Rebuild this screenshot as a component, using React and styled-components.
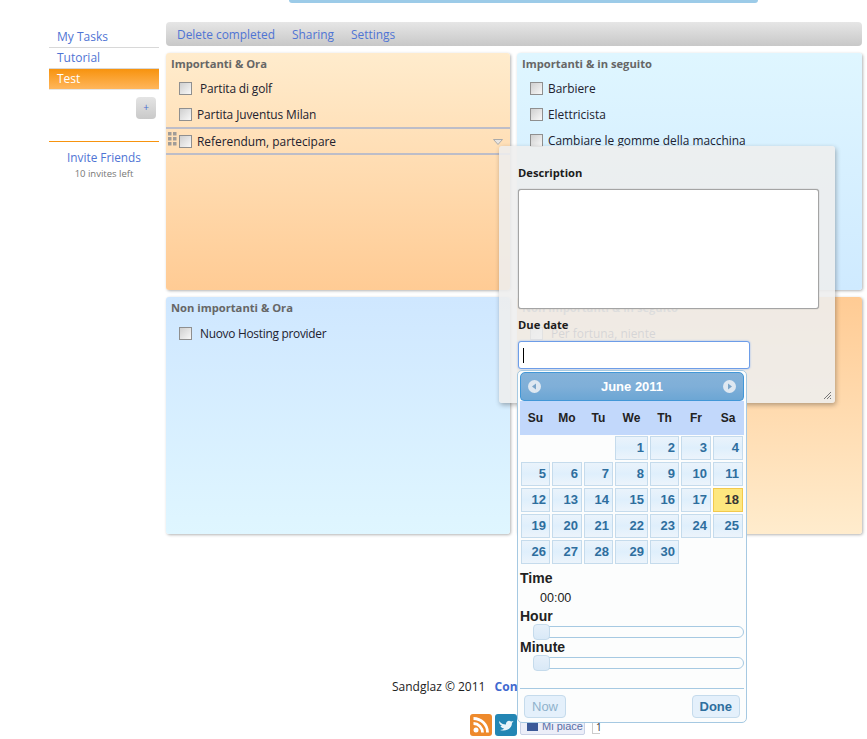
import React from 'react';
import styled, { createGlobalStyle } from 'styled-components';

const GlobalStyle = createGlobalStyle`
    html, body {
        margin: 0;
        padding: 0;
        background: #fff;
    }
    body {
        font-family: "Open Sans", "Noto Sans", sans-serif;
        font-size: 12px;
        color: #222;
        overflow: hidden;
    }
`;

const dayColumns = '29px 30px 29px 33px 29px 30px 30px';

const Page = styled.div`
    position: relative;
    width: 867px;
    height: 739px;
    overflow: hidden;
`;

const Layout = styled.div`
    display: flex;
    gap: 7px;
    padding: 22px 5px 0 49px;
`;

const Sidebar = styled.aside`
    width: 110px;
    padding-top: 5px;
    flex-shrink: 0;
`;

const ListLink = styled.div`
    height: 20px;
    line-height: 20px;
    padding-left: 8px;
    font-size: 12px;
    color: ${p => (p.$active ? '#fff' : '#4f74d4')};
    background: ${p => (p.$active ? 'linear-gradient(#f7930e, #ffb65c)' : 'transparent')};
    border-bottom: 1px solid ${p => (p.$active ? '#e6e6e6' : '#d8d8d8')};
`;

const AddRow = styled.div`
    display: flex;
    justify-content: flex-end;
    padding: 7px 3px 0 0;
`;

const AddButton = styled.div`
    width: 20px;
    height: 22px;
    border-radius: 4px;
    background: linear-gradient(#e4e4e4, #c9c9c9);
    color: #4a6fd0;
    font-size: 10px;
    line-height: 21px;
    text-align: center;
`;

const Invite = styled.div`
    margin-top: 22px;
    border-top: 1px solid #f7930e;
    padding-top: 7px;
    text-align: center;
`;

const InviteLink = styled.div`
    font-size: 11.8px;
    line-height: 16px;
    color: #4f74d4;
`;

const InviteNote = styled.div`
    font-size: 9.5px;
    line-height: 17px;
    color: #777;
`;

const Main = styled.main`
    width: 696px;
`;

const Toolbar = styled.div`
    display: flex;
    gap: 17px;
    align-items: center;
    height: 24px;
    padding-left: 11px;
    border-radius: 4px;
    background: linear-gradient(#e6e6e6, #c8c8c8);
`;

const ToolLink = styled.span`
    font-size: 11.9px;
    color: #4f74d4;
`;

const Grid = styled.div`
    display: grid;
    grid-template-columns: 344px 345px;
    grid-template-rows: 237px 237px;
    gap: 7px;
    margin-top: 7px;
`;

const Quadrant = styled.section`
    border-radius: 3px;
    padding-top: 3px;
    box-shadow: 1px 1px 3px rgba(0, 0, 0, 0.3);
    background: ${p => p.$bg};
`;

const QuadrantTitle = styled.h3`
    margin: 0;
    padding-left: 5px;
    font-size: 11.2px;
    line-height: 15px;
    font-weight: 700;
    color: #666;
`;

const Tasks = styled.div`
    margin-top: ${p => p.$top}px;
`;

const Task = styled.div`
    position: relative;
    display: flex;
    align-items: center;
    height: 26px;
    padding-left: 13px;
    font-size: 11.9px;
    letter-spacing: ${p => p.$track || 0}px;
    color: #22222e;
    ${p => p.$selected && `
        height: 24px;
        border-top: 2px solid #bdbdc8;
        border-bottom: 2px solid #bdbdc8;
    `}
`;

const Check = styled.span`
    flex-shrink: 0;
    width: 11px;
    height: 11px;
    margin-right: ${p => p.$gap || 5}px;
    border: 1px solid #8f8f8f;
    background: linear-gradient(135deg, #cfcfcf, #f8f8f8);
`;

const Grip = styled.svg`
    position: absolute;
    left: 2px;
    top: 3px;
`;

const Arrow = styled.svg`
    position: absolute;
    right: 7px;
    top: 10px;
`;

const Footer = styled.footer`
    margin-top: 145px;
    padding-left: 392px;
`;

const FooterText = styled.div`
    font-size: 12px;
    line-height: 16px;
    color: #222;
    white-space: nowrap;

    b {
        margin-left: 6px;
        color: #3f69cf;
    }
`;

const Social = styled.div`
    display: flex;
    gap: 3px;
    margin: 19px 0 0 78px;
`;

const IconTile = styled.svg`
    display: block;
    border-radius: 3px;
`;

const LikeButton = styled.div`
    display: flex;
    align-items: center;
    gap: 4px;
    box-sizing: border-box;
    width: 65px;
    height: 19px;
    margin-top: 2px;
    padding-left: 6px;
    border: 1px solid #c9d1e6;
    border-radius: 2px;
    background: #eceef8;
    font-family: "Liberation Sans", Arial, sans-serif;
    font-size: 11px;
    white-space: nowrap;
    color: #5a6fa6;
`;

const FbMark = styled.span`
    flex-shrink: 0;
    width: 11px;
    height: 11px;
    background: #3b5998;
`;

const LikeCount = styled.div`
    box-sizing: border-box;
    width: 8px;
    height: 14px;
    margin: 6px 0 0 4px;
    padding-left: 3px;
    border: 1px solid #ccc;
    border-right: 0;
    font-size: 10px;
    line-height: 13px;
    color: #333;
`;

const Notice = styled.div`
    position: absolute;
    left: 289px;
    top: -8px;
    width: 465px;
    height: 8px;
    border: 1px solid #9ccbe8;
    border-width: 0 2px 3px 2px;
    border-radius: 3px;
    background: #eef7fc;
`;

const Popup = styled.div`
    position: absolute;
    left: 499px;
    top: 146px;
    width: 336px;
    height: 257px;
    box-sizing: border-box;
    padding: 20px 19px;
    border-radius: 3px;
    background: rgba(238, 238, 238, 0.88);
    box-shadow: 1px 2px 5px rgba(0, 0, 0, 0.3);
`;

const FieldLabel = styled.div`
    font-size: 11.2px;
    line-height: 14px;
    font-weight: 700;
    color: #1c1c1c;
`;

const TextArea = styled.div`
    box-sizing: border-box;
    width: 301px;
    height: 120px;
    margin: 9px 0;
    border: 1px solid #a4a4a4;
    border-radius: 3px;
    background: #fff;
    box-shadow: 0 0 1px #888;
`;

const DateInput = styled.div`
    box-sizing: border-box;
    width: 232px;
    height: 28px;
    margin-top: 9px;
    padding: 6px 0 0 4px;
    border: 1px solid #6d9de8;
    border-radius: 3px;
    background: #fff;
    box-shadow: 0 0 2px #8db4f0;

    &::before {
        content: "";
        display: block;
        width: 1px;
        height: 15px;
        background: #000;
    }
`;

const Resizer = styled.svg`
    position: absolute;
    right: 3px;
    bottom: 3px;
`;

const Picker = styled.div`
    position: absolute;
    left: 517px;
    top: 370px;
    width: 230px;
    height: 353px;
    box-sizing: border-box;
    padding: 1px 2px;
    border: 1px solid #a6c9e2;
    border-radius: 5px;
    background: #fcfdfd;
    font-family: "Liberation Sans", Arial, sans-serif;
    color: #222;
`;

const PickerHead = styled.div`
    display: flex;
    align-items: center;
    justify-content: space-between;
    height: 27px;
    padding: 0 7px;
    border: 1px solid #4297d7;
    border-radius: 5px 5px 4px 4px;
    background: linear-gradient(#85b2d9, #7fafd8 50%, #6ca6d4);
    color: #fff;
    font-size: 13px;
    font-weight: 700;
`;

const NavDot = styled.svg`
    display: block;
`;

const Weekdays = styled.div`
    display: grid;
    grid-template-columns: ${dayColumns};
    column-gap: 2px;
    height: 34px;
    padding-left: 1px;
    align-items: center;
    background: #c2d8fb;
    font-size: 12px;
    font-weight: 700;
    text-align: center;
`;

const Days = styled.div`
    display: grid;
    grid-template-columns: ${dayColumns};
    grid-auto-rows: 24px;
    gap: 2px;
    margin-top: 1px;
    padding-left: 1px;
`;

const Day = styled.div`
    box-sizing: border-box;
    padding-right: 3px;
    border: 1px solid ${p => (p.$today ? '#f2c94c' : '#c5dbec')};
    background: ${p => (p.$today ? '#fde77f' : 'linear-gradient(#eaf3fb, #dfeffc 50%, #ecf4fb)')};
    color: ${p => (p.$today ? '#363636' : '#2e6e9e')};
    font-size: 13px;
    font-weight: 700;
    line-height: 22px;
    text-align: right;
`;

const BlankDay = styled.div``;

const TimeBlock = styled.div`
    margin-top: 7px;
`;

const TimeLabel = styled.div`
    font-size: 14px;
    font-weight: 700;
    line-height: 15px;
    color: #222;
`;

const TimeValue = styled.div`
    margin: 4px 0 3px 20px;
    font-size: 12.5px;
    line-height: 16px;
`;

const SliderTrack = styled.div`
    position: relative;
    height: 10px;
    margin: 2px 0 2px 13px;
    border: 1px solid #a6c9e2;
    border-radius: 6px;
    background: #fcfdfd;
`;

const SliderThumb = styled.span`
    position: absolute;
    left: -1px;
    top: -3px;
    width: 15px;
    height: 14px;
    border: 1px solid #c5dbec;
    border-radius: 4px;
    background: linear-gradient(#e6f0fa, #d9e9f7);
`;

const PickerFooter = styled.div`
    display: flex;
    justify-content: space-between;
    margin-top: 19px;
    padding: 6px 4px 0;
    border-top: 1px solid #a6c9e2;
`;

const PickerButton = styled.div`
    padding: 0 7px;
    height: 21px;
    line-height: 21px;
    border: 1px solid #c5dbec;
    border-radius: 4px;
    background: #e4f0fb;
    font-size: 13px;
    font-weight: ${p => (p.$primary ? 700 : 400)};
    color: ${p => (p.$primary ? '#2e6e9e' : '#8fb2cc')};
`;

const days = [
    null, null, null, 1, 2, 3, 4,
    5, 6, 7, 8, 9, 10, 11,
    12, 13, 14, 15, 16, 17, 18,
    19, 20, 21, 22, 23, 24, 25,
    26, 27, 28, 29, 30,
];

function NavButton({ flip }) {
    return (
        <NavDot width="13" height="13" viewBox="0 0 13 13">
            <circle cx="6.5" cy="6.5" r="6.5" fill="#dfe8f1" />
            <path d={flip ? 'M5 3.5 L9 6.5 L5 9.5 Z' : 'M8 3.5 L4 6.5 L8 9.5 Z'} fill="#7ba5c9" />
        </NavDot>
    );
}

export default function App() {
    return (
        <Page>
            <GlobalStyle />
            <Notice />
            <Layout>
                <Sidebar>
                    <ListLink>My Tasks</ListLink>
                    <ListLink>Tutorial</ListLink>
                    <ListLink $active>Test</ListLink>
                    <AddRow>
                        <AddButton>+</AddButton>
                    </AddRow>
                    <Invite>
                        <InviteLink>Invite Friends</InviteLink>
                        <InviteNote>10 invites left</InviteNote>
                    </Invite>
                </Sidebar>
                <Main>
                    <Toolbar>
                        <ToolLink>Delete completed</ToolLink>
                        <ToolLink>Sharing</ToolLink>
                        <ToolLink>Settings</ToolLink>
                    </Toolbar>
                    <Grid>
                        <Quadrant $bg="linear-gradient(#ffeccd, #ffcb94)">
                            <QuadrantTitle>Importanti &amp; Ora</QuadrantTitle>
                            <Tasks $top={4}>
                                <Task $track={-0.12}><Check $gap={8} />Partita di golf</Task>
                                <Task $track={-0.08}><Check />Partita Juventus Milan</Task>
                                <Task $selected>
                                    <Grip width="9" height="14" viewBox="0 0 9 14" fill="#a09c98">
                                        <rect x="0" y="0" width="3.5" height="3.5" />
                                        <rect x="5" y="0" width="3.5" height="3.5" />
                                        <rect x="0" y="5" width="3.5" height="3.5" />
                                        <rect x="5" y="5" width="3.5" height="3.5" />
                                        <rect x="0" y="10" width="3.5" height="3.5" />
                                        <rect x="5" y="10" width="3.5" height="3.5" />
                                    </Grip>
                                    <Check />Referendum, partecipare
                                    <Arrow width="10" height="6" viewBox="0 0 10 6">
                                        <path d="M0.5 0.5 H9.5 L5 5.5 Z" fill="#e8e4e0" stroke="#aaa" />
                                    </Arrow>
                                </Task>
                            </Tasks>
                        </Quadrant>
                        <Quadrant $bg="linear-gradient(#dff6ff, #cfeaff)">
                            <QuadrantTitle>Importanti &amp; in seguito</QuadrantTitle>
                            <Tasks $top={4}>
                                <Task><Check />Barbiere</Task>
                                <Task><Check />Elettricista</Task>
                                <Task><Check />Cambiare le gomme della macchina</Task>
                            </Tasks>
                        </Quadrant>
                        <Quadrant $bg="linear-gradient(#cfe7ff, #dff6ff)">
                            <QuadrantTitle>Non importanti &amp; Ora</QuadrantTitle>
                            <Tasks $top={5}>
                                <Task $track={-0.27}><Check $gap={8} />Nuovo Hosting provider</Task>
                            </Tasks>
                        </Quadrant>
                        <Quadrant $bg="linear-gradient(#ffcb94, #ffeccd)">
                            <QuadrantTitle>Non importanti &amp; in seguito</QuadrantTitle>
                            <Tasks $top={5}>
                                <Task><Check $gap={8} />Per fortuna, niente</Task>
                            </Tasks>
                        </Quadrant>
                    </Grid>
                </Main>
            </Layout>

            <Footer>
                <FooterText>Sandglaz © 2011 <b>Contact</b></FooterText>
                <Social>
                    <IconTile width="22" height="22" viewBox="0 0 22 22">
                        <rect width="22" height="22" fill="#ee8a2c" />
                        <circle cx="6" cy="16" r="2.5" fill="#fff" />
                        <path d="M3.5 9.5 A9 9 0 0 1 12.5 18.5 M3.5 4.5 A14 14 0 0 1 17.5 18.5" fill="none" stroke="#fff" strokeWidth="2.8" />
                    </IconTile>
                    <IconTile width="22" height="22" viewBox="0 0 22 22">
                        <rect width="22" height="22" fill="#2386b4" />
                        <path d="M4 7 C6 9.5 8 10.5 11 10.5 C10.5 7.5 14 5.5 16 7.5 L18.5 7 L17 9 C17 14 12 18 5 16 C7.5 16 8.5 15 9 14.5 C6.5 14 5.5 12.5 5.5 12 L7 12 C5 11 4 9 4 7 Z" fill="#e8f4fa" />
                    </IconTile>
                    <LikeButton><FbMark />Mi piace</LikeButton>
                    <LikeCount>1</LikeCount>
                </Social>
            </Footer>

            <Popup>
                <FieldLabel>Description</FieldLabel>
                <TextArea />
                <FieldLabel>Due date</FieldLabel>
                <DateInput />
                <Resizer width="9" height="9" viewBox="0 0 9 9" stroke="#777">
                    <path d="M1 8 L8 1 M4 8 L8 4 M7 8 L8 7" />
                </Resizer>
            </Popup>

            <Picker>
                <PickerHead>
                    <NavButton />
                    <span>June 2011</span>
                    <NavButton flip />
                </PickerHead>
                <Weekdays>
                    {['Su', 'Mo', 'Tu', 'We', 'Th', 'Fr', 'Sa'].map(d => <span key={d}>{d}</span>)}
                </Weekdays>
                <Days>
                    {days.map((d, i) => (d
                        ? <Day key={i} $today={d === 18}>{d}</Day>
                        : <BlankDay key={i} />))}
                </Days>
                <TimeBlock>
                    <TimeLabel>Time</TimeLabel>
                    <TimeValue>00:00</TimeValue>
                    <TimeLabel>Hour</TimeLabel>
                    <SliderTrack><SliderThumb /></SliderTrack>
                    <TimeLabel>Minute</TimeLabel>
                    <SliderTrack><SliderThumb /></SliderTrack>
                </TimeBlock>
                <PickerFooter>
                    <PickerButton>Now</PickerButton>
                    <PickerButton $primary>Done</PickerButton>
                </PickerFooter>
            </Picker>
        </Page>
    );
}
